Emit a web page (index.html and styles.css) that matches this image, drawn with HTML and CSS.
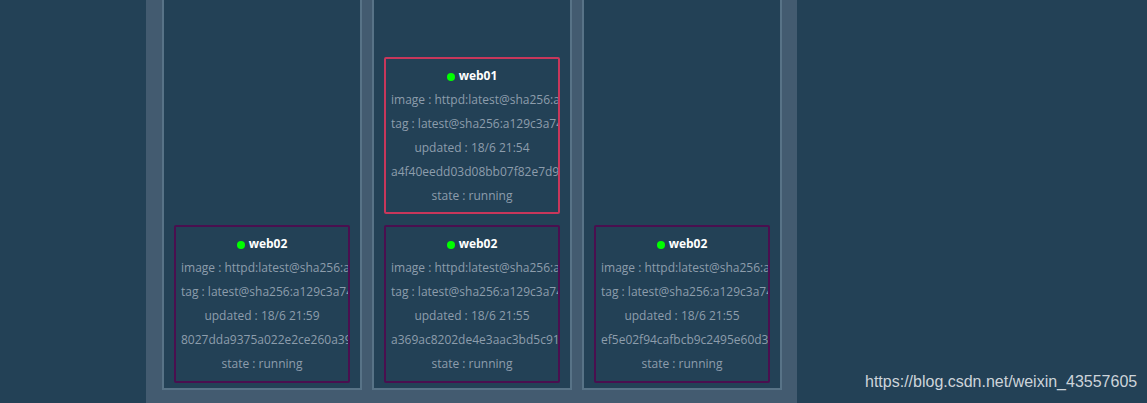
FILE: index.html
```html
<!DOCTYPE html>
<html>
<head>
<meta charset="utf-8">
<link rel="stylesheet" href="styles.css">
</head>
<body>
<div class="panel">
  <div class="column">
    <div class="card">
      <div class="title"><span class="dot"></span>web02</div>
      <div class="line">image : httpd:latest@sha256:a129c3a74</div>
      <div class="line">tag : latest@sha256:a129c3a74c3a7</div>
      <div class="line">updated : 18/6 21:59</div>
      <div class="line">8027dda9375a022e2ce260a39</div>
      <div class="line">state : running</div>
    </div>
  </div>
  <div class="column">
    <div class="card active">
      <div class="title"><span class="dot"></span>web01</div>
      <div class="line">image : httpd:latest@sha256:a129c3a74</div>
      <div class="line">tag : latest@sha256:a129c3a74c3a7</div>
      <div class="line">updated : 18/6 21:54</div>
      <div class="line">a4f40eedd03d08bb07f82e7d9c</div>
      <div class="line">state : running</div>
    </div>
    <div class="card">
      <div class="title"><span class="dot"></span>web02</div>
      <div class="line">image : httpd:latest@sha256:a129c3a74</div>
      <div class="line">tag : latest@sha256:a129c3a74c3a7</div>
      <div class="line">updated : 18/6 21:55</div>
      <div class="line">a369ac8202de4e3aac3bd5c91f</div>
      <div class="line">state : running</div>
    </div>
  </div>
  <div class="column">
    <div class="card">
      <div class="title"><span class="dot"></span>web02</div>
      <div class="line">image : httpd:latest@sha256:a129c3a74</div>
      <div class="line">tag : latest@sha256:a129c3a74c3a7</div>
      <div class="line">updated : 18/6 21:55</div>
      <div class="line">ef5e02f94cafbcb9c2495e60d3c</div>
      <div class="line">state : running</div>
    </div>
  </div>
</div>
<div class="watermark">https://blog.csdn.net/weixin_43557605</div>
</body>
</html>
```
FILE: styles.css
```css
html, body {
  margin: 0;
  padding: 0;
  background: #234156;
  height: 403px;
  overflow: hidden;
  font-family: "Open Sans", "DejaVu Sans", sans-serif;
}
.panel {
  margin-left: 146px;
  width: 651px;
  height: 403px;
  background: #435b70;
  box-sizing: border-box;
  padding: 0 15px 0 16px;
  display: flex;
  gap: 10px;
  align-items: flex-start;
}
.column {
  width: 200px;
  height: 390px;
  box-sizing: border-box;
  border: 2px solid #587387;
  border-top: none;
  background: #234156;
  display: flex;
  flex-direction: column;
  justify-content: flex-end;
  padding: 0 10px 5px;
  gap: 11px;
}
.card {
  height: 158px;
  flex-shrink: 0;
  box-sizing: border-box;
  border: 2px solid #4a0f4f;
  border-radius: 2px;
  padding: 5px;
  overflow: hidden;
  text-align: center;
  font-size: 12px;
  line-height: 24px;
  color: #8d9dac;
}
.card.active {
  border-color: #c8375b;
  height: 157px;
}
.title {
  color: #ffffff;
  font-weight: bold;
  white-space: nowrap;
}
.dot {
  display: inline-block;
  width: 8px;
  height: 8px;
  border-radius: 50%;
  background: #00ff00;
  margin-right: 4px;
  vertical-align: -0.5px;
}
.line {
  white-space: nowrap;
}
.watermark {
  position: absolute;
  left: 865px;
  top: 373px;
  font-family: "Liberation Sans", Arial, sans-serif;
  font-size: 16px;
  color: #cdd4da;
  white-space: nowrap;
}
```
